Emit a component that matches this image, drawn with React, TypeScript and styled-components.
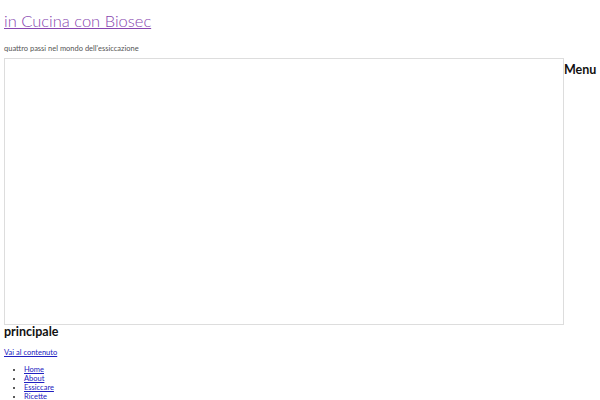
import * as React from "react"
import styled, { createGlobalStyle } from "styled-components"

const Global = createGlobalStyle`
  body {
    margin: 0;
    padding: 0 4px;
    font-family: Lato, "Liberation Sans", sans-serif;
    background: #fff;
  }
`

const Title = styled.a`
  display: block;
  margin-top: 11px;
  font-size: 16.5px;
  font-weight: 300;
  line-height: 20px;
  color: #8846b0;
  text-decoration: underline;
  text-decoration-thickness: 1px;
`

const Tagline = styled.p`
  margin: 13px 0 0;
  font-size: 7.5px;
  line-height: 10px;
  color: #555;
`

const NavRow = styled.div`
  display: flex;
  align-items: flex-start;
  margin-top: 4px;
`

const ToggleBox = styled.div`
  width: 558px;
  height: 265px;
  border: 1px solid #ddd;
  flex-shrink: 0;
`

const Heading = styled.h3`
  margin: 0;
  font-size: 12.5px;
  font-weight: 700;
  line-height: 14px;
  color: #111;
`

const MenuWord = styled(Heading)`
  margin-top: 5px;
`

const SkipLink = styled.a`
  display: block;
  margin-top: 9px;
  font-size: 7.5px;
  line-height: 10px;
  color: #2020c0;
  text-decoration: underline;
`

const List = styled.ul`
  margin: 7px 0 0;
  padding-left: 20px;
  font-size: 7.5px;
  line-height: 9px;
  li {
    color: #222;
  }
  a {
    color: #2020c0;
    text-decoration: underline;
  }
`

const items = ["Home", "About", "Essiccare", "Ricette"]

const App = (): React.ReactElement => {
  return (
    <>
      <Global />
      <Title href="#">in Cucina con Biosec</Title>
      <Tagline>quattro passi nel mondo dell'essiccazione</Tagline>
      <NavRow>
        <ToggleBox />
        <MenuWord as="span">Menu</MenuWord>
      </NavRow>
      <Heading>principale</Heading>
      <SkipLink href="#">Vai al contenuto</SkipLink>
      <List>
        {items.map((it) => (
          <li key={it}>
            <a href="#">{it}</a>
          </li>
        ))}
      </List>
    </>
  )
}

export default App
